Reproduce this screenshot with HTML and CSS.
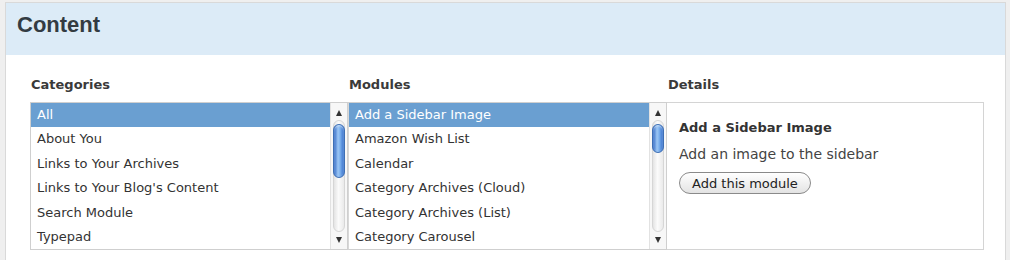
FILE: index.html
```html
<!DOCTYPE html>
<html lang="en">
<head>
  <meta charset="UTF-8">
  <title>Content</title>
  <link rel="stylesheet" href="styles.css">
</head>
<body>

  <section class="panel">
    <header class="panel-head">
      <h1>Content</h1>
    </header>

    <div class="panel-body">

      <!-- Categories -->
      <div class="col">
        <h2>Categories</h2>
        <div class="listbox">
          <ul class="options">
            <li class="selected">All</li>
            <li>About You</li>
            <li>Links to Your Archives</li>
            <li>Links to Your Blog's Content</li>
            <li>Search Module</li>
            <li>Typepad</li>
          </ul>
          <div class="sb">
            <span class="arrow up"></span>
            <div class="track"><div class="thumb thumb-lg"></div></div>
            <span class="arrow down"></span>
          </div>
        </div>
      </div>

      <!-- Modules -->
      <div class="col">
        <h2>Modules</h2>
        <div class="listbox">
          <ul class="options">
            <li class="selected">Add a Sidebar Image</li>
            <li>Amazon Wish List</li>
            <li>Calendar</li>
            <li>Category Archives (Cloud)</li>
            <li>Category Archives (List)</li>
            <li>Category Carousel</li>
          </ul>
          <div class="sb">
            <span class="arrow up"></span>
            <div class="track"><div class="thumb thumb-sm"></div></div>
            <span class="arrow down"></span>
          </div>
        </div>
      </div>

      <!-- Details -->
      <div class="col">
        <h2>Details</h2>
        <div class="details">
          <h3>Add a Sidebar Image</h3>
          <p>Add an image to the sidebar</p>
          <button type="button" class="btn">Add this module</button>
        </div>
      </div>

    </div>
  </section>

</body>
</html>
```

FILE: styles.css
```css
/* ================================
   Page & panel
   ================================ */
body {
  margin: 0;
  background-color: #efefef;
  font-family: "DejaVu Sans", sans-serif;
  color: #333;
}

.panel {
  margin: 2px 4px 0 5px;
  background-color: #fff;
  border: 1px solid #d9d9d9;
  border-bottom: none;
}

.panel-head {
  height: 52px;
  padding: 9px 0 0 11px;
  box-sizing: border-box;
  background-color: #dcebf7;
}

.panel-head h1 {
  margin: 0;
  font-family: "Liberation Sans", Arial, sans-serif;
  font-size: 22px;
  line-height: 26px;
  font-weight: bold;
  color: #333b42;
}

.panel-body {
  display: grid;
  grid-template-columns: 318px 319px 317px;
  padding: 21px 0 12px 24px;
}

.col h2 {
  margin: 0 0 9px 1px;
  font-size: 13px;
  line-height: 17px;
  font-weight: bold;
  color: #3a3a3a;
}

/* ================================
   List boxes (select-like)
   ================================ */
.listbox {
  display: flex;
  height: 148px;
  border: 1px solid #cfcfcf;
  box-sizing: border-box;
}

.col + .col .listbox {
  border-left-color: #d8d8d8;
}

.options {
  flex: 1;
  margin: 0;
  padding: 0;
  list-style: none;
}

.options li {
  height: 24.4px;
  line-height: 24.4px;
  padding-left: 6px;
  font-size: 13px;
  color: #333;
  white-space: nowrap;
}

.options li.selected {
  background-color: #6a9fd1;
  color: #fff;
}

/* Aqua style scrollbar */
.sb {
  width: 16px;
  display: flex;
  flex-direction: column;
  align-items: center;
  border-left: 1px solid #e2e2e2;
  background-color: #f7f7f7;
}

.arrow {
  width: 0;
  height: 0;
  border-left: 3px solid transparent;
  border-right: 3px solid transparent;
}

.arrow.up {
  margin: 7px 0 4px;
  border-bottom: 6px solid #333;
}

.arrow.down {
  margin: 5px 0 6px;
  border-top: 6px solid #333;
}

.track {
  flex: 1;
  width: 12px;
  box-sizing: border-box;
  border: 1px solid #d6d6d6;
  border-radius: 6px;
  background: linear-gradient(to right, #e4e4e4, #fbfbfb 45%, #eaeaea);
}

.thumb {
  margin: 3px -1px 0;
  border-radius: 6px;
  border: 1px solid #3d6fb5;
  background: linear-gradient(to right, #2d66c4, #9cc6f4 40%, #7eb2ee 60%, #2f6ac8);
  box-shadow: inset 0 1px 2px rgba(255, 255, 255, 0.6);
}

.thumb-lg {
  height: 52px;
}

.thumb-sm {
  height: 27px;
}

/* ================================
   Details box
   ================================ */
.details {
  height: 148px;
  box-sizing: border-box;
  padding: 16px 12px;
  border: 1px solid #d4d4d4;
  border-left: none;
}

.details h3 {
  margin: 0;
  font-size: 13px;
  line-height: 17px;
  font-weight: bold;
  color: #333;
}

.details p {
  margin: 9px 0 9px;
  font-size: 14px;
  line-height: 18px;
  color: #444;
}

.btn {
  height: 22px;
  padding: 0 12px;
  border: 1px solid #8a8a8a;
  border-radius: 11px;
  background: linear-gradient(#ffffff, #f1f1f1 50%, #e3e3e3);
  font-family: "DejaVu Sans", sans-serif;
  font-size: 13px;
  color: #222;
}
```
